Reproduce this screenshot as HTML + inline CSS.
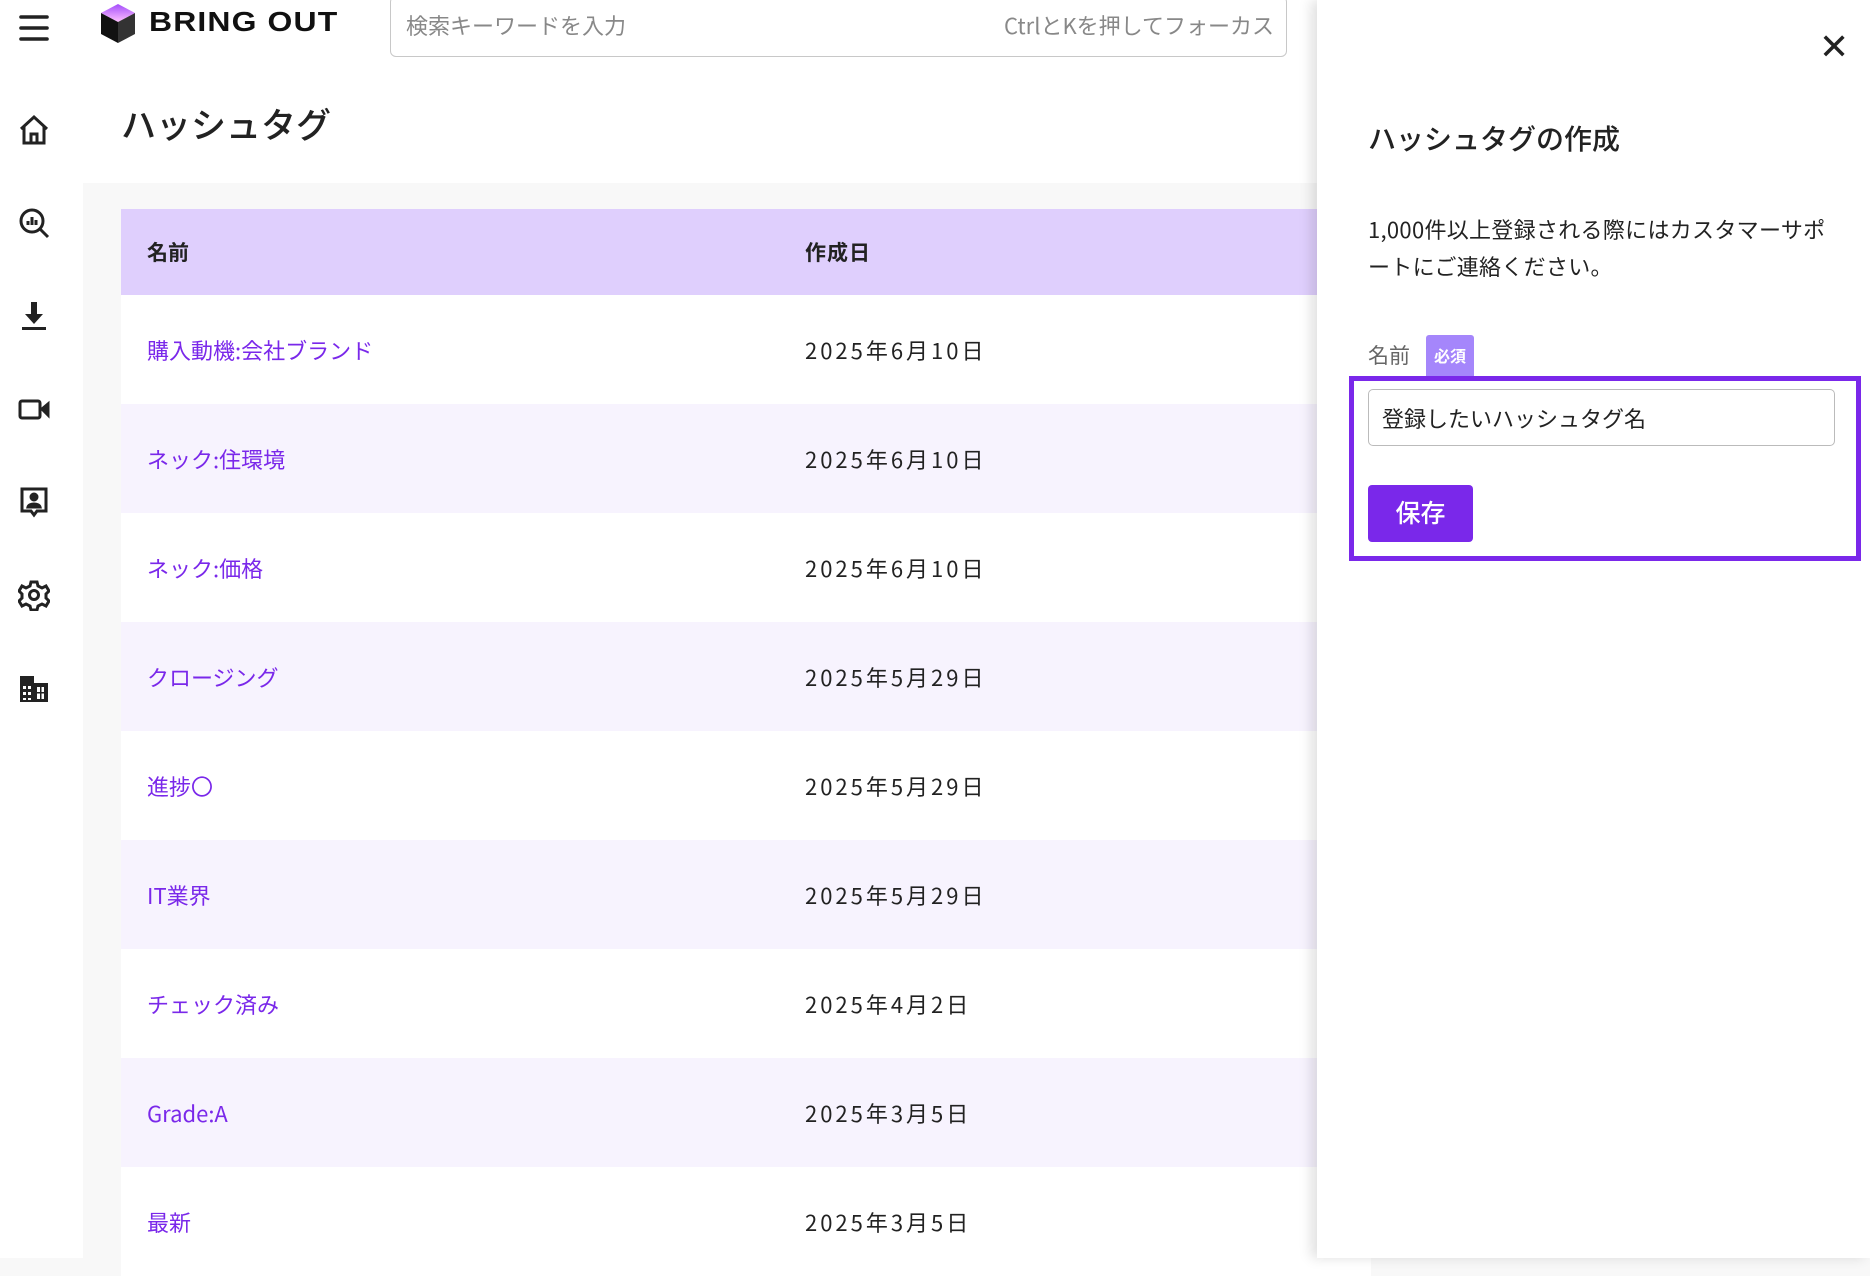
<!DOCTYPE html>
<html><head><meta charset="utf-8"><style>
*{box-sizing:border-box;margin:0;padding:0}
body{width:1870px;height:1258px;overflow:hidden;position:relative;background:#f8f8f8;font-family:"Noto Sans CJK JP","Liberation Sans",sans-serif;color:#222}
.side{position:absolute;left:0;top:0;width:83px;height:1258px;background:#fff}
.side svg{position:absolute;left:18px;width:32px;height:32px}
.hdr{position:absolute;left:83px;top:0;right:0;height:70px;background:#fff}
.logo{position:absolute;left:100px;top:4px}
.brand{position:absolute;left:149px;top:6px;font-size:28px;font-weight:900;letter-spacing:1px;color:#111;font-family:"Liberation Sans",sans-serif;transform:scaleX(1.14);transform-origin:left}
.search{position:absolute;left:390px;top:-4px;width:897px;height:61px;border:1px solid #c8c8c8;border-radius:6px;background:#fff;font-size:22px;color:#888}
.search .l{position:absolute;left:15px;top:12px}.search .r{position:absolute;right:12px;top:12px}
.title{position:absolute;left:83px;top:70px;width:1300px;height:113px;background:#fff}
.title h1{position:absolute;left:38px;top:28px;font-size:35px;font-weight:500}
.tbl{position:absolute;left:121px;top:209px;width:1250px}
.th{height:86px;background:#dfcffd;font-size:21px;font-weight:700;position:relative}
.row{height:109px;position:relative;font-size:22px;background:#fff}
.row:nth-child(even){background:#f7f3fe}
.c1{position:absolute;left:26px;top:50%;transform:translateY(-50%);color:#7a28ea}
.c2{position:absolute;left:684px;top:50%;transform:translateY(-50%);letter-spacing:3px}
.th .c1{color:#222}.th .c2{letter-spacing:1px}
.panel{position:absolute;left:1317px;top:0;width:553px;height:1258px;background:#fff;box-shadow:-6px 0 12px rgba(0,0,0,.12)}
.x{position:absolute;left:502px;top:18px;font-size:36px;color:#222}
.ptitle{position:absolute;left:51px;top:118px;font-size:28px;font-weight:500}
.desc{position:absolute;left:51px;top:211px;width:470px;font-size:22px;line-height:37px;letter-spacing:.3px}
.lbl{position:absolute;left:51px;top:340px;font-size:21px;color:#666}
.badge{position:absolute;left:109px;top:335px;width:48px;height:41px;background:#a586fb;color:#fff;font-size:16px;font-weight:700;text-align:center;line-height:41px;border-radius:3px 3px 0 0}
.box{position:absolute;left:32px;top:376px;width:512px;height:185px;border:5px solid #7a28ea}
.inp{position:absolute;left:51px;top:389px;width:467px;height:57px;border:1px solid #bbb;border-radius:5px;font-size:22px;padding:12px 0 0 13px;color:#222}
.btn{position:absolute;left:51px;top:485px;width:105px;height:57px;background:#7a28ea;border-radius:4px;color:#fff;font-size:25px;text-align:center;line-height:55px;font-weight:500}
</style></head><body>
<div class="side">
<svg style="top:12px" viewBox="0 0 32 32"><g stroke="#222" stroke-width="3.6" stroke-linecap="round"><line x1="3" y1="5" x2="29" y2="5"/><line x1="3" y1="16" x2="29" y2="16"/><line x1="3" y1="27" x2="29" y2="27"/></g></svg>
<svg style="top:114px" viewBox="0 0 32 32" fill="none" stroke="#222" stroke-width="3"><path d="M3 15L16 3l13 12M6 12v17h20V12M13 29v-9h6v9"/></svg>
<svg style="top:207px" viewBox="0 0 32 32" fill="none" stroke="#222" stroke-width="3"><circle cx="14" cy="14" r="11"/><path d="M22 22l8 8M10 18v-4M14 18v-8M18 18v-5"/></svg>
<svg style="top:300px" viewBox="0 0 32 32" fill="#222"><path d="M13 2h6v12h6l-9 10-9-10h6z"/><rect x="4" y="27" width="24" height="3"/></svg>
<svg style="top:393px" viewBox="0 0 32 32" fill="none" stroke="#222" stroke-width="3"><rect x="2" y="8" width="20" height="17" rx="2"/><path d="M24 16l6-5v11z" fill="#222"/></svg>
<svg style="top:486px" viewBox="0 0 32 32" fill="none" stroke="#222" stroke-width="3"><path d="M4 3h24v22h-9l-3 4-3-4H4z"/><circle cx="16" cy="11" r="3" fill="#222"/><path d="M10 21c1-4 11-4 12 0z" fill="#222"/></svg>
<svg style="top:579px" viewBox="0 0 32 32" fill="none" stroke="#222" stroke-width="3"><path d="M13 3h6l1 4 4 2 4-2 3 5-3 3v4l3 3-3 5-4-2-4 2-1 4h-6l-1-4-4-2-4 2-3-5 3-3v-4l-3-3 3-5 4 2 4-2z"/><circle cx="16" cy="16" r="4.5"/></svg>
<svg style="top:672px" viewBox="0 0 32 32" fill="#222"><path d="M2 4h14v7h14v19H2z"/><g fill="#fff"><rect x="5" y="14" width="3" height="3"/><rect x="10" y="14" width="3" height="3"/><rect x="5" y="20" width="3" height="3"/><rect x="10" y="20" width="3" height="3"/><rect x="5" y="26" width="3" height="2"/><rect x="10" y="26" width="3" height="2"/><rect x="19" y="15" width="7" height="12"/></g><rect x="22" y="15" width="1.5" height="12"/><rect x="19" y="20" width="7" height="1.5"/></svg>
</div>
<div class="hdr"></div>
<svg class="logo" width="36" height="40" viewBox="0 0 36 40"><defs><linearGradient id="g" x1="0" y1="0" x2="0" y2="1"><stop offset="0" stop-color="#a34dfb"/><stop offset="1" stop-color="#ffc0ff"/></linearGradient></defs><path d="M18 0L35 9 18 18 1 9z" fill="url(#g)"/><path d="M1 9l17 9v21L1 30z" fill="#111"/><path d="M35 9L18 18v21l17-9z" fill="#333"/></svg>
<div class="brand">BRING OUT</div>
<div class="search"><span class="l">検索キーワードを入力</span><span class="r">CtrlとKを押してフォーカス</span></div>
<div class="title"><h1>ハッシュタグ</h1></div>
<div class="tbl">
<div class="th"><span class="c1">名前</span><span class="c2">作成日</span></div>
<div>
<div class="row"><span class="c1">購入動機:会社ブランド</span><span class="c2">2025年6月10日</span></div>
<div class="row"><span class="c1">ネック:住環境</span><span class="c2">2025年6月10日</span></div>
<div class="row"><span class="c1">ネック:価格</span><span class="c2">2025年6月10日</span></div>
<div class="row"><span class="c1">クロージング</span><span class="c2">2025年5月29日</span></div>
<div class="row"><span class="c1">進捗〇</span><span class="c2">2025年5月29日</span></div>
<div class="row"><span class="c1">IT業界</span><span class="c2">2025年5月29日</span></div>
<div class="row"><span class="c1">チェック済み</span><span class="c2">2025年4月2日</span></div>
<div class="row"><span class="c1">Grade:A</span><span class="c2">2025年3月5日</span></div>
<div class="row"><span class="c1">最新</span><span class="c2">2025年3月5日</span></div>
</div></div>
<div class="panel">
<div class="x">✕</div>
<div class="ptitle">ハッシュタグの作成</div>
<div class="desc">1,000件以上登録される際にはカスタマーサポートにご連絡ください。</div>
<div class="lbl">名前</div><div class="badge">必須</div>
<div class="box"></div>
<div class="inp">登録したいハッシュタグ名</div>
<div class="btn">保存</div>
</div>
</body></html>
